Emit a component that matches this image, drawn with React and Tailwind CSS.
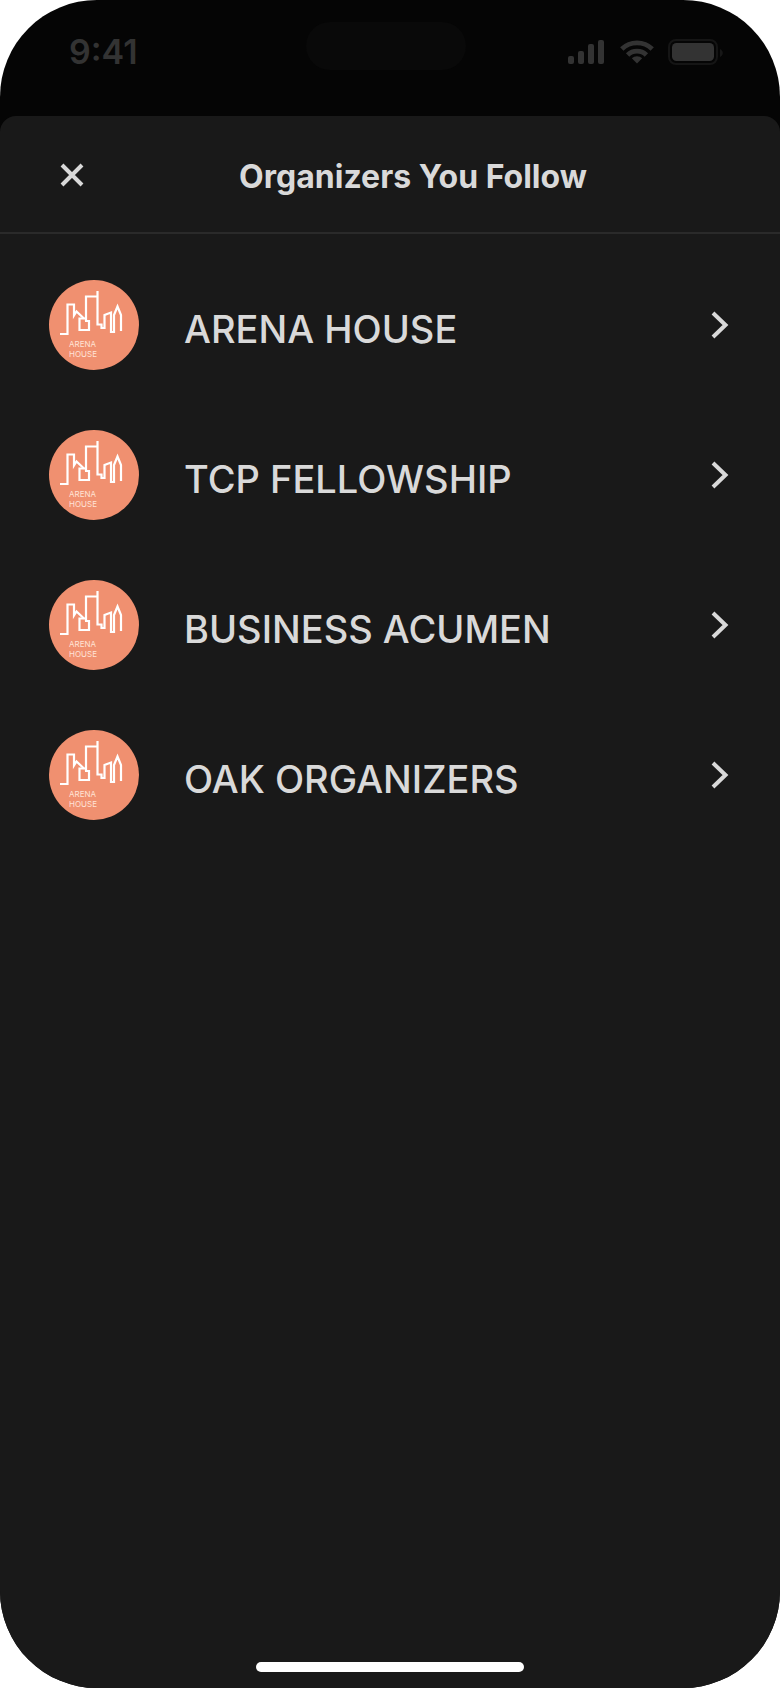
import { useState } from "react"

const organizers = [
  { id: 1, name: "ARENA HOUSE" },
  { id: 2, name: "TCP FELLOWSHIP" },
  { id: 3, name: "BUSINESS ACUMEN" },
  { id: 4, name: "OAK ORGANIZERS" },
]

function StatusBar() {
  return (
    <div className="grid h-[116px] shrink-0 grid-cols-3 pt-[22px] pr-2 text-[#333333]">
      <div className="flex h-[60px] items-center pl-[69px] text-[34px] leading-none font-semibold">9:41</div>
      <div className="h-12 w-40 justify-self-center rounded-full bg-[#090909]"></div>

      {/* signal, wifi, battery */}
      <div className="flex h-[60px] items-center justify-end gap-4 pr-[49px]">
        <svg width="36" height="24" viewBox="0 0 36 24" fill="currentColor">
          <rect x="0" y="16" width="6" height="8" rx="2" />
          <rect x="10" y="11" width="6" height="13" rx="2" />
          <rect x="20" y="4" width="6" height="20" rx="2" />
          <rect x="30" y="0" width="6" height="24" rx="2" />
        </svg>
        <svg width="34" height="24" viewBox="0 0 34 24" fill="none" stroke="currentColor" strokeWidth="4.8">
          <path d="M1.8 9a21.8 21.8 0 0 1 30.4 0" />
          <path d="M7.6 15a13.5 13.5 0 0 1 18.8 0" />
          <path d="M17 23.5l-5.2-5.3a7.6 7.6 0 0 1 10.4 0z" fill="currentColor" stroke="none" />
        </svg>
        <svg className="-ml-0.5 shrink-0" width="55" height="26" viewBox="0 0 55 26" fill="currentColor">
          <rect x="1" y="1" width="48" height="24" rx="7" fill="none" stroke="#151515" strokeWidth="2" />
          <rect x="4" y="4" width="42" height="18" rx="4.5" />
          <path d="M52 10v8c1.8-.8 2.8-2.3 2.8-4s-1-3.2-2.8-4z" fill="#171717" />
        </svg>
      </div>
    </div>
  )
}

function OrganizerLogo() {
  return (
    <svg className="size-[90px] shrink-0" viewBox="0 0 90 90" fill="none">
      <circle cx="45" cy="45" r="45" fill="#f09070" />
      <g stroke="#ffffff" strokeWidth="2.2">
        <path d="M11 54h7.5V24.5H25V35.5l2.5-4 7.5 7" />
        <path d="M37 41V16.5h11.5M36 38.5H30.5V50h9.5V41h-4M48.5 11v33.5h4V48h3V35l6.5-2.5V52h3V35l3.5-8.5L72 35v16" />
      </g>
      <g fill="#ffe3d6" fontSize="8">
        <text x="20" y="67">ARENA</text>
        <text x="20" y="77">HOUSE</text>
      </g>
    </svg>
  )
}

export default function App() {

  const [open, setOpen] = useState(true)

  return (
    <div className="bg-white font-[Inter,sans-serif]">
      <div className="flex min-h-screen flex-col overflow-hidden rounded-[97px] bg-[#050505]">
        <StatusBar />

        {open && (
          <section className="flex grow flex-col rounded-t-2xl bg-[#191919] text-[#d9d9d9]">
            <header className="grid h-[118px] grid-cols-[88px_1fr_40px] items-center border-b-2 border-[#2a2a2a] pt-0.5 pr-[37px] pl-[35px]">
              <button type="button" aria-label="Close" onClick={() => setOpen(false)} className="flex size-[74px] cursor-pointer items-center justify-center">
                <svg width="24" height="24" viewBox="0 0 24 24" fill="none" stroke="currentColor" strokeWidth="4">
                  <path d="M2 2l20 20M22 2L2 22" />
                </svg>
              </button>
              <h1 className="pt-1 text-center text-[32px] leading-none font-bold">Organizers You Follow</h1>
            </header>

            <ul className="flex flex-col pt-4">
              {organizers.map((organizer) => (
                <li key={organizer.id}>
                  <button type="button" className="flex h-[150px] w-full cursor-pointer items-center pr-[51px] pl-[49px] text-left">
                    <OrganizerLogo />
                    <span className="grow pt-2 pl-[45px] text-[38px] leading-none font-medium">{organizer.name}</span>
                    <svg width="18" height="28" viewBox="0 0 18 28" fill="none" stroke="currentColor" strokeWidth="4">
                      <path d="M2 2l12.5 12L2 26" />
                    </svg>
                  </button>
                </li>
              ))}
            </ul>

            <div className="mx-auto mt-auto mb-4 h-[10px] w-[268px] rounded-full bg-white"></div>
          </section>
        )}
      </div>
    </div>
  )
}
